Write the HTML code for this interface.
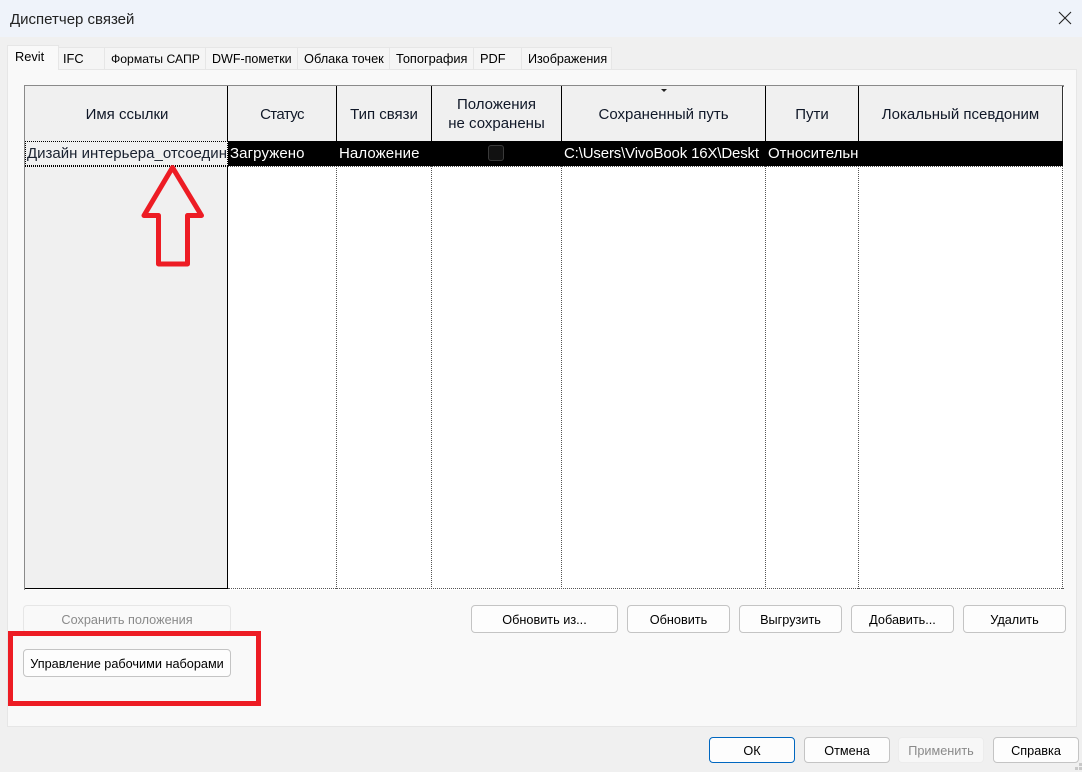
<!DOCTYPE html>
<html lang="ru"><head><meta charset="utf-8"><title>Диспетчер связей</title>
<style>
html,body{margin:0;padding:0;width:1082px;height:772px;overflow:hidden;background:#f0f0f0}
*{box-sizing:border-box}
body{font-family:"Liberation Sans","DejaVu Sans",sans-serif;color:#000;position:relative}
.a{position:absolute}
.t{position:absolute;white-space:nowrap}
.tab{position:absolute;top:47px;height:22px;background:#f5f5f5;border:1px solid #e6e6e6;border-bottom:none;font-size:12.8px;line-height:22px;padding-left:4px;white-space:nowrap;overflow:hidden}
.btn{position:absolute;height:28px;background:#fdfdfd;border:1px solid #c4c4c4;border-radius:4px;font-size:12.7px;line-height:28px;text-align:center;white-space:nowrap}
.hc{position:absolute;top:86px;height:55px;background:#f0f0f0;border-right:1px solid #000;font-size:15px;text-align:center;display:flex;align-items:center;justify-content:center;line-height:19px;color:#101828;padding-top:2px}
.cell{position:absolute;top:143px;height:22px;color:#fff;font-size:15px;line-height:22px;white-space:nowrap;overflow:hidden;padding-left:2px}
.dv{position:absolute;top:166px;height:423px;width:1px;border-left:1px dotted #555}
</style></head><body>
<div class="a" style="left:0;top:0;width:1082px;height:37px;background:#eff3fa"></div>
<div class="t" style="left:10px;top:11px;font-size:15px;line-height:18px;color:#222">Диспетчер связей</div>
<svg class="a" style="left:1058px;top:11px" width="14" height="14" viewBox="0 0 14 14"><path d="M1 1L13 13M13 1L1 13" stroke="#222" stroke-width="1.1" fill="none"/></svg>

<div class="a" style="left:7px;top:69px;width:1070px;height:658px;background:#f9f9f9;border:1px solid #e6e6e6"></div>

<div class="tab" style="left:58px;width:47px">IFC</div>
<div class="tab" style="left:104px;width:102px;padding-left:6px;font-size:12.2px">Форматы САПР</div>
<div class="tab" style="left:205px;width:93px;padding-left:6px;font-size:12.5px">DWF-пометки</div>
<div class="tab" style="left:297px;width:93px;padding-left:6px">Облака точек</div>
<div class="tab" style="left:389px;width:85px;padding-left:6px">Топография</div>
<div class="tab" style="left:473px;width:49px;padding-left:6px">PDF</div>
<div class="tab" style="left:521px;width:91px;padding-left:6px;font-size:12.6px">Изображения</div>
<div class="tab" style="left:7px;top:45px;width:52px;height:25px;background:#f9f9f9;padding-left:7px;z-index:2;line-height:21px">Revit</div>

<!-- grid -->
<div class="a" style="left:24px;top:85px;width:1040px;height:505px;background:#fff;border-top:2px solid #8a8a8a;border-left:1px solid #8a8a8a"></div>
<div class="a" style="left:25px;top:87px;width:203px;height:502px;background:#f0f0f0;border-right:1px solid #000;border-bottom:1px solid #000"></div>

<div class="hc" style="left:25px;width:203px;padding-left:2px">Имя ссылки</div>
<div class="hc" style="left:228px;width:109px;letter-spacing:-.6px">Статус</div>
<div class="hc" style="left:337px;width:95px">Тип связи</div>
<div class="hc" style="left:432px;width:130px;padding-top:0">Положения<br>не сохранены</div>
<div class="hc" style="left:562px;width:204px">Сохраненный путь</div>
<div class="hc" style="left:766px;width:93px">Пути</div>
<div class="hc" style="left:859px;width:204px;border-right:1px solid #333">Локальный псевдоним</div>
<svg class="a" style="left:661px;top:89px" width="7" height="4"><path d="M0 0H6L3 3Z" fill="#222"/></svg>

<div class="a" style="left:228px;top:141px;width:835px;height:25px;background:#000"></div>
<div class="a" style="left:25px;top:141px;width:203px;height:25px;background:#f0f0f0;border:1px dotted #000"></div>
<div class="t" style="left:27px;top:143px;width:200px;font-size:15px;line-height:22px;overflow:hidden;color:#1a2230">Дизайн интерьера_отсоединено</div>
<div class="cell" style="left:228px;width:108px;letter-spacing:.1px">Загружено</div>
<div class="cell" style="left:337px;width:94px;letter-spacing:.1px">Наложение</div>
<div class="a" style="left:488px;top:145px;width:16px;height:16px;background:#111;border:1px solid #3a3a3a;border-radius:3px"></div>
<div class="cell" style="left:562px;width:203px;letter-spacing:-.15px">C:\Users\VivoBook 16X\Deskt</div>
<div class="cell" style="left:766px;width:92px">Относительный</div>

<div class="a" style="left:25px;top:166px;width:203px;height:1px;border-top:1px dotted #000"></div>
<div class="a" style="left:228px;top:166px;width:835px;height:1px;border-top:1px dotted #555"></div>
<div class="a" style="left:228px;top:588px;width:836px;height:1px;border-top:1px dotted #555"></div>
<div class="dv" style="left:336px"></div>
<div class="dv" style="left:431px"></div>
<div class="dv" style="left:561px"></div>
<div class="dv" style="left:765px"></div>
<div class="dv" style="left:858px"></div>
<div class="dv" style="left:1062px"></div>

<svg class="a" style="left:140px;top:163px" width="66" height="105" viewBox="140 163 66 105"><path d="M172.5 167.5L144 215.5H158.5V264H187.5V215.5H201.5Z" fill="none" stroke="#ed1c24" stroke-width="5" stroke-linejoin="round"/></svg>

<div class="btn" style="left:23px;top:605px;width:208px;background:#f9f9f9;border-color:#e6e6e6;color:#8a8a8a">Сохранить положения</div>
<div class="btn" style="left:23px;top:649px;width:208px">Управление рабочими наборами</div>
<div class="a" style="left:8px;top:631px;width:253px;height:75px;border:5px solid #ed1c24"></div>

<div class="btn" style="left:471px;top:605px;width:147px">Обновить из...</div>
<div class="btn" style="left:627px;top:605px;width:103px">Обновить</div>
<div class="btn" style="left:739px;top:605px;width:103px">Выгрузить</div>
<div class="btn" style="left:851px;top:605px;width:103px">Добавить...</div>
<div class="btn" style="left:963px;top:605px;width:103px">Удалить</div>

<div class="btn" style="left:709px;top:737px;width:86px;height:26px;line-height:26px;border-color:#0067c0">ОК</div>
<div class="btn" style="left:804px;top:737px;width:86px;height:26px;line-height:26px">Отмена</div>
<div class="btn" style="left:898px;top:737px;width:86px;height:26px;line-height:26px;background:#f7f7f7;border-color:#ececec;color:#8a8a8a">Применить</div>
<div class="btn" style="left:993px;top:737px;width:86px;height:26px;line-height:26px">Справка</div>

<svg class="a" style="left:1074px;top:762px" width="8" height="10"><path d="M5 1h3v3H5zM1 5h3v3H1zM5 5h3v3H5z" fill="#c8c8c8"/></svg>
</body></html>
